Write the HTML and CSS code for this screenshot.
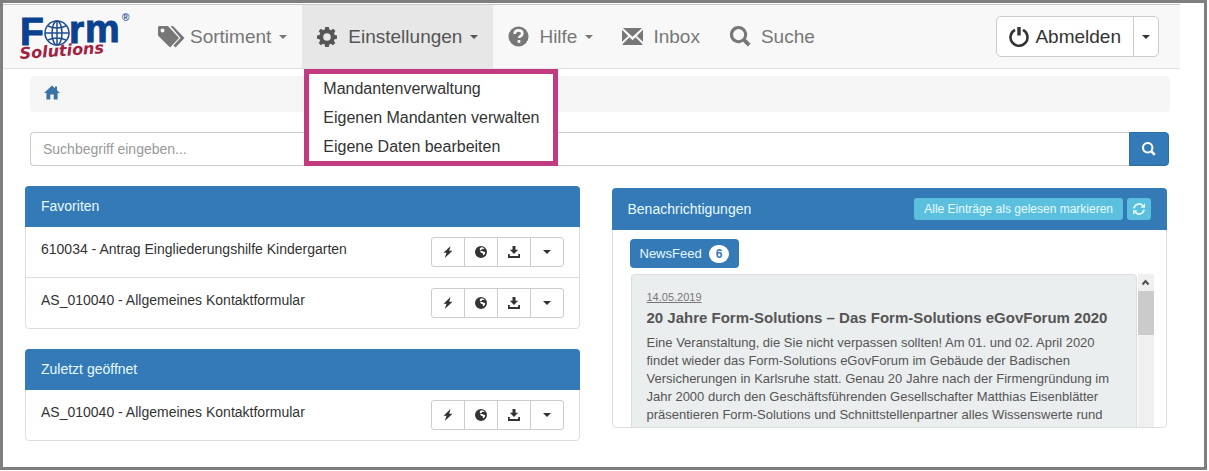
FILE: index.html
```html
<!DOCTYPE html>
<html lang="de">
<head>
<meta charset="utf-8">
<title>Form-Solutions</title>
<link rel="stylesheet" href="styles.css">
</head>
<body>
<svg class="sprite" aria-hidden="true">
  <symbol id="bolt" viewBox="0 0 12 12"><path d="M8.600 0 1.500 6.700h3L2.800 12l7.700-7.300H7.200z"/></symbol>
  <symbol id="globe" viewBox="0 0 12 12"><path fill-rule="evenodd" d="M6 0a6 6 0 1 0 0 12A6 6 0 0 0 6 0zM6.200 1.200l1.800.2 1.500 1.200-.8.500-1.200-.3-.8.900-1.200.6.300.8 1.500-.2 1.200.8 1.700.4-.2 1.500-1.300 1.600-.7-.3-.3-1.600-1.600-.5-.9-1.300.3-1.200-.9-.8.400-1.200z"/></symbol>
  <symbol id="download" viewBox="0 0 12 12"><path d="M4.500 0h3v3.800h2.700L6 8 1.800 3.800h2.700zM0 8h1.800v2h8.400V8H12v4H0z"/></symbol>
  <symbol id="search" viewBox="0 0 22 22"><path fill-rule="evenodd" d="M9 0a9 9 0 1 0 4.700 16.600l5 5 2.900-2.900-5-5A9 9 0 0 0 9 0zm0 3.200a5.800 5.800 0 1 1 0 11.600A5.800 5.800 0 0 1 9 3.200z"/></symbol>
</svg>
<div class="window">
  <header class="navbar">
    <a class="brand" href="#" aria-label="Form Solutions">
      <svg class="logo" viewBox="0 0 116 60">
        <g class="logo-form">
          <text x="2" y="38">F</text>
          <text x="51" y="36">r</text>
          <text x="67" y="35">m</text>
        </g>
        <g class="logo-globe"><circle cx="39" cy="26" r="12"/><ellipse cx="39" cy="26" rx="5" ry="12"/><path d="M39 14v24M27 26h24M30 19q9 4 18 0M30 33q9-4 18 0"/></g>
        <text class="logo-reg" x="104" y="14">®</text>
        <text class="logo-sub" x="2" y="52" transform="rotate(-4 2 52)">Solutions</text>
      </svg>
    </a>
    <nav class="menu">
      <a class="item" href="#"><svg class="tags" viewBox="0 0 27 22"><path fill-rule="evenodd" d="M1 0h9l11 12-9 9.500L0 9.500V1zM4.500 2.500a2 2 0 1 0 0 4 2 2 0 0 0 0-4z"/><path d="M12.500 0H15l11.500 12-9 9.500-2-2L22.500 12z"/></svg>Sortiment<span class="caret"></span></a>
      <div class="item-wrap">
        <a class="item active" href="#" aria-expanded="true"><svg class="gear" viewBox="0 0 20 20"><path fill-rule="evenodd" d="M8.200 0h3.600l.5 2.600 1.700.7 2.200-1.500 2.200 2.200-1.400 2.300.7 1.600 2.300.5v3.300l-2.400.5-.7 1.600 1.400 2.300-2.300 2.200-2.200-1.500-1.500.7-.5 2.500H8.200l-.5-2.500-1.600-.7-2.200 1.500-2.200-2.200 1.500-2.300-.7-1.600L0 11.700V8.400l2.500-.5.700-1.600L1.700 4 4 1.800l2.100 1.500 1.600-.7zM10 6.200a3.800 3.800 0 1 0 0 7.600 3.800 3.800 0 0 0 0-7.600z"/></svg>Einstellungen<span class="caret"></span></a>
        <div class="dropdown">
          <a href="#">Mandantenverwaltung</a>
          <a href="#">Eigenen Mandanten verwalten</a>
          <a href="#">Eigene Daten bearbeiten</a>
        </div>
      </div>
      <a class="item" href="#"><svg class="ico" viewBox="0 0 22 22"><circle cx="11" cy="11" r="10.500"/><path class="mark" d="M7 8.300C7 5.500 8.900 4.600 11 4.600c2.300 0 4 1.200 4 3.200 0 2.900-3.400 2.600-3.400 4.900"/><path class="mark" d="M11.500 14.700v2.900"/></svg>Hilfe<span class="caret"></span></a>
      <a class="item" href="#"><svg class="ico" viewBox="0 0 22 22"><path d="M1 2h20L11 11.200zM0 4l6.500 6.500L0 16.500zM22 4v12.500l-6.500-6zM7.800 11.800l3.200 3 3.200-3L21.500 19v1H.5v-1z"/></svg>Inbox</a>
      <a class="item" href="#"><svg class="ico"><use href="#search"/></svg>Suche</a>
    </nav>
    <div class="logout">
      <button type="button"><svg class="power" viewBox="0 0 20 20"><path d="M6 2.800a8.500 8.500 0 1 0 8 0" fill="none" stroke="currentColor" stroke-width="2.600"/><path d="M8.300 0h3.400v8.500H8.300z"/></svg>Abmelden</button>
      <button type="button" class="split" aria-label="Weitere Optionen"><span class="caret"></span></button>
    </div>
  </header>
  <main>
    <nav class="breadcrumb"><a href="#" aria-label="Startseite"><svg viewBox="0 0 16 14"><path d="M8 0l3 2.800V1h2v3.700L16 7.600H13.600V14H9.700V9H6.300v5H2.400V7.600H0z"/></svg></a></nav>
    <form class="search">
      <input type="text" placeholder="Suchbegriff eingeben..." aria-label="Suchbegriff">
      <button type="button" aria-label="Suchen"><svg><use href="#search"/></svg></button>
    </form>
    <div class="columns">
      <div class="left">
        <section class="panel">
          <h2>Favoriten</h2>
          <div class="row"><span>610034 - Antrag Eingliederungshilfe Kindergarten</span>
            <div class="tools"><button type="button" aria-label="Start"><svg><use href="#bolt"/></svg></button><button type="button" aria-label="Web"><svg><use href="#globe"/></svg></button><button type="button" aria-label="Download"><svg><use href="#download"/></svg></button><button type="button" aria-label="Mehr"><span class="caret"></span></button></div></div>
          <div class="row"><span>AS_010040 - Allgemeines Kontaktformular</span>
            <div class="tools"><button type="button" aria-label="Start"><svg><use href="#bolt"/></svg></button><button type="button" aria-label="Web"><svg><use href="#globe"/></svg></button><button type="button" aria-label="Download"><svg><use href="#download"/></svg></button><button type="button" aria-label="Mehr"><span class="caret"></span></button></div></div>
        </section>
        <section class="panel">
          <h2>Zuletzt geöffnet</h2>
          <div class="row"><span>AS_010040 - Allgemeines Kontaktformular</span>
            <div class="tools"><button type="button" aria-label="Start"><svg><use href="#bolt"/></svg></button><button type="button" aria-label="Web"><svg><use href="#globe"/></svg></button><button type="button" aria-label="Download"><svg><use href="#download"/></svg></button><button type="button" aria-label="Mehr"><span class="caret"></span></button></div></div>
        </section>
      </div>
      <section class="panel news">
        <div class="news-head"><h2>Benachrichtigungen</h2>
          <button type="button" class="mark-read">Alle Einträge als gelesen markieren</button>
          <button type="button" class="refresh" aria-label="Aktualisieren"><svg viewBox="0 0 12 12"><path d="M1 5.300A5 5 0 0 1 9.600 2.600M11 6.700A5 5 0 0 1 2.400 9.400" fill="none" stroke="currentColor" stroke-width="1.700"/><path d="M12 .3v4.400H7.600zM0 11.700V7.300h4.400z"/></svg></button>
        </div>
        <div class="news-body">
          <button type="button" class="tab">NewsFeed <span class="badge">6</span></button>
          <div class="feed">
            <article>
              <time>14.05.2019</time>
              <h3>20 Jahre Form-Solutions – Das Form-Solutions eGovForum 2020</h3>
              <p>Eine Veranstaltung, die Sie nicht verpassen sollten! Am 01. und 02. April 2020<br>findet wieder das Form-Solutions eGovForum im Gebäude der Badischen<br>Versicherungen in Karlsruhe statt. Genau 20 Jahre nach der Firmengründung im<br>Jahr 2000 durch den Geschäftsführenden Gesellschafter Matthias Eisenblätter<br>präsentieren Form-Solutions und Schnittstellenpartner alles Wissenswerte rund</p>
            </article>
            <div class="scrollbar"><svg viewBox="0 0 15 17"><path d="M4.500 10.500l3-3.500 3 3.500" fill="none" stroke="#505050" stroke-width="2"/></svg><div class="thumb"></div></div>
          </div>
        </div>
      </section>
    </div>
  </main>
</div>
</body>
</html>
```
FILE: styles.css
```css
* { box-sizing: border-box; }
body { margin: 0; padding: 0 2px 1px 0; background: #fff; color: #333; font: 14px/20px "Liberation Sans", Arial, sans-serif; }
button, input { font: inherit; color: inherit; margin: 0; }
a { color: inherit; text-decoration: none; }
svg { fill: currentColor; display: block; flex: none; }
h2, h3, p { margin: 0; font-size: 14px; font-weight: normal; }
.sprite { position: absolute; width: 0; height: 0; }
.window { border: 3px solid #7f7f7f; min-height: 470px; padding: 1px 24px 0 0; }
.caret { border: 4px solid transparent; border-top-color: currentColor; border-bottom: 0; }

.navbar { display: flex; align-items: center; height: 65px; border-top: 1px solid #c8c8c8; border-bottom: 1px solid #e2e2e2; background: #f8f8f8; color: #777; font-size: 19px; padding-right: 21px; }
.brand { padding-left: 15px; width: 140px; }
.logo { width: 116px; height: 60px; overflow: visible; font-family: "Liberation Sans", Arial, sans-serif; }
.logo-form { fill: #0b4290; stroke: #0b4290; stroke-width: 1; font-weight: bold; font-size: 39px; }
.logo-globe { fill: none; stroke: #1d4d8f; stroke-width: 1.500; }
.logo-reg { fill: #1d4d8f; font-size: 10px; font-weight: bold; }
.logo-sub { fill: #a3203f; font-size: 16px; font-weight: bold; font-style: italic; font-family: "DejaVu Sans", sans-serif; }
.menu { display: flex; align-self: stretch; flex: 1; }
.item { display: flex; align-items: center; height: 63px; padding: 0 15px; }
.item .caret { margin-left: 8px; }
.item .ico { width: 21px; height: 21px; margin-right: 10px; }
.item .gear { width: 20px; height: 20px; margin-right: 11px; }
.tags { width: 27px; height: 22px; margin-right: 5px; }
.mark { fill: none; stroke: #f8f8f8; stroke-width: 2.800; }
.item-wrap { position: relative; }
.active { background: #e7e7e7; color: #555; }
.item-wrap + .item { padding-right: 14px; }
.dropdown { position: absolute; z-index: 2; top: 64px; left: 2px; display: flex; flex-direction: column; padding: 0 14px; border: 5px solid #c23a80; background: #fff; color: #333; font-size: 16px; line-height: 29px; white-space: nowrap; }
.logout { display: flex; color: #333; }
.logout button { display: flex; align-items: center; gap: 6px; height: 41px; padding: 0 12px; background: #fff; border: 1px solid #ccc; border-radius: 5px 0 0 5px; }
.logout .split { padding: 0 8px; margin-left: -1px; border-radius: 0 5px 5px 0; }
.power { width: 20px; height: 20px; }

main { padding: 7px 10px 0 22px; }
.breadcrumb { margin-left: 5px; height: 36px; padding: 9px 14px; border-radius: 4px; background: #f5f5f5; color: #3a73a5; }
.breadcrumb svg { width: 16px; height: 15px; }
.search { display: flex; margin: 20px 1px 20px 5px; height: 34px; }
.search input { flex: 1; min-width: 0; padding: 0 12px; border: 1px solid #ccc; border-right: 0; border-radius: 4px 0 0 4px; background: #fff; }
.search input::placeholder { color: #999; opacity: 1; }
.search button { width: 40px; padding: 0 12px; border: 1px solid #2e6da4; border-radius: 0 4px 4px 0; background: #337ab7; color: #fff; }
.search button svg { width: 14px; height: 14px; }

.columns { display: grid; grid-template-columns: 555fr 556fr; gap: 32px; padding-right: 3px; align-items: start; }
.left { display: grid; gap: 20px; }
.panel { border: 1px solid #ddd; border-radius: 4px; background: #fff; min-width: 0; }
.panel > h2, .news-head { margin: -1px -1px 0; padding: 10px 16px 11px; background: #337ab7; color: #e8fbff; border-radius: 4px 4px 0 0; }
.row { display: flex; justify-content: space-between; padding: 10px 15px; }
.row + .row { border-top: 1px solid #ddd; }
.row > span { padding-top: 2px; }
.tools { display: flex; }
.tools button { display: flex; align-items: center; justify-content: center; width: 34px; height: 30px; padding: 0; background: #fff; border: 1px solid #ccc; }
.tools button + button { margin-left: -1px; }
.tools button:first-child { border-radius: 3px 0 0 3px; }
.tools button:last-child { border-radius: 0 3px 3px 0; }
.tools svg { width: 12px; height: 12px; }

.news { margin-top: 2px; }
.news-head { display: flex; align-items: center; gap: 4px; padding: 10px 16px; }
.news-head h2 { flex: 1; }
.news-head button { height: 22px; padding: 0 6px; border: 0; border-radius: 3px; background: #5bc0de; color: #e8fbff; font-size: 12px; }
.news-head .mark-read { padding: 0 10px; }
.refresh svg { width: 12px; height: 12px; }
.news-body { padding: 9px 12px 0 17px; }
.tab { display: flex; align-items: center; gap: 7px; height: 29px; padding: 0 10px; border: 0; border-radius: 4px; background: #337ab7; color: #e8fbff; font-size: 13px; }
.badge { padding: 0 7px; border-radius: 9px; line-height: 18px; background: #fff; color: #337ab7; font-weight: bold; font-size: 12px; }
.feed { display: flex; height: 153px; margin: 6px 0 0 1px; overflow: hidden; }
article { flex: 1; min-width: 0; padding: 13px 15px; border: 1px solid #ddd; border-bottom: 0; border-radius: 4px 4px 0 0; background: #eaeeef; color: #555; white-space: nowrap; }
time { display: block; font-size: 11px; line-height: 18px; text-decoration: underline; color: #777; }
h3 { font-size: 15px; line-height: 24px; font-weight: bold; }
article p { padding-top: 4px; font-size: 13px; line-height: 18px; }
.scrollbar { width: 16px; margin-left: 1px; background: #f0f0f0; }
.scrollbar svg { width: 15px; height: 17px; }
.thumb { height: 44px; background: #cbcbcb; }
```
